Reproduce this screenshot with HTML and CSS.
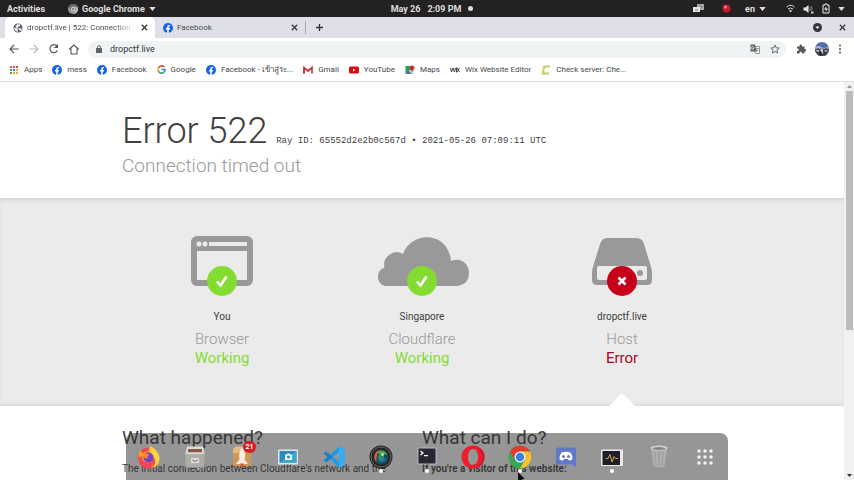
FILE: index.html
```html
<!DOCTYPE html>
<html lang="en">
<head>
<meta charset="utf-8">
<title>dropctf.live | 522: Connection timed out</title>
<link rel="stylesheet" href="styles.css">
</head>
<body>
<svg class="defs" aria-hidden="true">
  <defs>
    <symbol id="fb" viewBox="0 0 20 20"><circle cx="10" cy="10" r="10" fill="#1764e8"/><path d="M8.400 20v-7H6v-3h2.400V8c0-2.600 1.500-4 3.800-4l2 .2v2.500h-1.200c-1.200 0-1.500.7-1.500 1.500V10h2.600l-.4 3h-2.200v7z" fill="#fff"/></symbol>
    <symbol id="close" viewBox="0 0 10 10"><path d="M2 2l6 6M8 2l-6 6" stroke="#35363a" stroke-width="1.400"/></symbol>
    <symbol id="down" viewBox="0 0 8 5"><path d="M0 0h8L4 5z" fill="#dedede"/></symbol>
    <symbol id="check" viewBox="0 0 30 30"><circle cx="15" cy="15" r="15" fill="#84dc32"/><path d="M10 15.500l3.600 4L19.500 10.500" fill="none" stroke="#fff" stroke-width="2.600"/></symbol>
  </defs>
</svg>

<header class="desktop-bar">
  <div class="bar-left">
    <span>Activities</span>
    <span class="app-menu">
      <svg width="10" height="10" viewBox="0 0 20 20"><circle cx="10" cy="10" r="10" fill="#999"/><path d="M10 5h9A10 10 0 0 0 1.500 5l4 7z" fill="#666"/><path d="M10 20l5-8 4-7a10 10 0 0 1-9 15z" fill="#bbb"/><circle cx="10" cy="10" r="4.500" fill="#ddd"/><circle cx="10" cy="10" r="3" fill="#888"/></svg>
      <span>Google Chrome</span>
      <svg width="7" height="4"><use href="#down"/></svg>
    </span>
  </div>
  <div class="bar-clock"><span>May 26</span><span>2:09 PM</span><i class="notice"></i></div>
  <div class="bar-right">
    <svg class="tray-windows" width="11" height="9" viewBox="0 0 11 9"><path d="M4 0h7v6H4z" fill="#aaa"/><path d="M0 3h7v5H0z" fill="#e5e5e5"/><path d="M6 2h3v2M2 6h3" stroke="#888" fill="none"/></svg>
    <svg class="tray-record" width="9" height="9" viewBox="0 0 9 9"><circle cx="4.500" cy="4.500" r="4" fill="#c51930"/><circle cx="3.500" cy="3" r="1.500" fill="#f28a91"/></svg>
    <span class="tray-lang">en <svg width="7" height="4"><use href="#down"/></svg></span>
    <svg width="9" height="9" viewBox="0 0 18 18" fill="none" stroke="#ddd" stroke-width="2"><path d="M1 6q8-7 16 0M4 10q5-4 10 0"/><path d="M6 13q3-2 6 0l-3 4z" fill="#ddd" stroke="none"/></svg>
    <svg width="11" height="10" viewBox="0 0 22 20"><path d="M1 7h4l6-5v16l-6-5H1z" fill="#e5e5e5"/><path d="M13 6q3 4 0 8M16 4q4 6 1 9" stroke="#888" stroke-width="2" fill="none"/><path d="M16 15h5v4h-5z" fill="#ccc"/></svg>
    <svg width="8" height="11" viewBox="0 0 16 22"><path d="M2 4h4V2h4v2h4v16H2z" fill="none" stroke="#eee" stroke-width="2"/><path d="M9 6l-5 7h4l-1 5 5-7H8z" fill="#eee"/></svg>
    <svg width="7" height="4"><use href="#down"/></svg>
  </div>
</header>

<nav class="tabs" aria-label="Tabs">
  <div class="tab tab-active">
    <svg width="10" height="10" viewBox="0 0 20 20"><circle cx="10" cy="10" r="9" fill="#555a60"/><path d="M3 9l4 1 3 3-1 5-4-2-3-5zM9 2l6 1-2 4-3 1v3l4-1 4 2-2 4-3-1-2-3-4-2-2-4z" fill="#e6e8ea"/></svg>
    <span class="tab-title">dropctf.live | 522: Connection</span>
    <button aria-label="Close tab"><svg width="9" height="9"><use href="#close"/></svg></button>
  </div>
  <div class="tab">
    <svg width="10" height="10"><use href="#fb"/></svg>
    <span class="tab-title">Facebook</span>
    <button aria-label="Close tab"><svg width="9" height="9"><use href="#close"/></svg></button>
  </div>
  <button class="new-tab" aria-label="New tab"><svg width="9" height="9" viewBox="0 0 9 9"><path d="M4.500 1v7M1 4.500h7" stroke="#333" stroke-width="1.300"/></svg></button>
  <div class="window-buttons">
    <button aria-label="Search tabs"><svg width="9" height="9" viewBox="0 0 9 9"><circle cx="4.500" cy="4.500" r="4.500" fill="#35363a"/><path d="M2.500 3.500h4l-2 2.500z" fill="#fff"/></svg></button>
    <button aria-label="Close window"><svg width="9" height="9"><use href="#close"/></svg></button>
  </div>
</nav>

<div class="toolbar">
  <div class="nav-buttons">
    <button aria-label="Back"><svg width="10" height="10" viewBox="0 0 20 20"><path d="M19 10H2M10 2l-8 8 8 8" fill="none" stroke="#50545a" stroke-width="2.200"/></svg></button>
    <button aria-label="Forward"><svg width="10" height="10" viewBox="0 0 20 20"><path d="M1 10h17M10 2l8 8-8 8" fill="none" stroke="#b8babd" stroke-width="2.200"/></svg></button>
    <button aria-label="Reload"><svg width="10" height="10" viewBox="0 0 20 20"><path d="M17 13a8 8 0 1 1-1-9" fill="none" stroke="#50545a" stroke-width="2.400"/><path d="M18 0v8h-8z" fill="#50545a"/></svg></button>
    <button aria-label="Home"><svg width="10" height="11" viewBox="0 0 20 22"><path d="M1 10l9-8 9 8h-3v10H4V10z" fill="none" stroke="#50545a" stroke-width="2.200"/></svg></button>
  </div>
  <form class="address">
    <svg width="6" height="8" viewBox="0 0 12 16"><path d="M3 7V4.500a3 3 0 0 1 6 0V7" fill="none" stroke="#5f6368" stroke-width="2"/><rect y="6" width="12" height="10" rx="1" fill="#5f6368"/></svg>
    <input aria-label="Address" value="dropctf.live">
    <button type="button" aria-label="Translate"><svg width="10" height="10" viewBox="0 0 20 20"><path d="M8 5h11v14h-8z" fill="#fff" stroke="#777" stroke-width="1.500"/><path d="M1 1h9l4 14H1z" fill="#62666b"/><path d="M9 7.500H6v1.500h1.500a2.500 2.500 0 1 1-.5-3" fill="none" stroke="#fff" stroke-width="1.300"/><path d="M12 9h6M15 8v2M17 10q-1 3-4 5M13 11l4 4" stroke="#666" fill="none"/></svg></button>
    <button type="button" aria-label="Bookmark"><svg width="10" height="10" viewBox="0 0 20 20"><path d="M10 2l2.400 5.500 6 .5-4.500 4 1.300 6L10 15l-5.200 3 1.300-6-4.500-4 6-.5z" fill="none" stroke="#50545a" stroke-width="1.700"/></svg></button>
  </form>
  <div class="tool-buttons">
    <button aria-label="Extensions"><svg width="10" height="10" viewBox="0 0 20 20"><path d="M2 5h5V3.500a2.500 2.500 0 0 1 5 0V5h5v5h1a2.500 2.500 0 0 1 0 5h-1v4h-5v-1a2.500 2.500 0 0 0-5 0v1H2v-5h1a2.500 2.500 0 0 0 0-5H2z" fill="#55595e"/></svg></button>
    <button aria-label="Profile"><svg width="14" height="14" viewBox="0 0 28 28"><circle cx="14" cy="14" r="14" fill="#4f6fae"/><path d="M1 10q6-4 12 0t14-1v5H0z" fill="#a7b8d8"/><path d="M0 15l6-3 3 2 4-3 5 3 4-2 6 3a14 14 0 0 1-28 0z" fill="#454b50"/><path d="M3 16h5v3H3zM11 14l3-3 2 6-1 7h-4zM19 17h6v2h-6z" fill="#cbd0d3"/><path d="M8 21l4-3 3 8-5 1zM18 20l4 1-2 4z" fill="#1e2328"/></svg></button>
    <button aria-label="Menu"><svg width="4" height="10" viewBox="0 0 4 10" fill="#50545a"><circle cx="2" cy="1.500" r="1"/><circle cx="2" cy="5" r="1"/><circle cx="2" cy="8.500" r="1"/></svg></button>
  </div>
</div>

<nav class="bookmarks" aria-label="Bookmarks">
  <a href="#"><svg width="10" height="10" viewBox="0 0 10 10"><path d="M1 1h2v2H1zM4 1h2v2H4zM7 1h2v2H7z" fill="#d95045"/><path d="M1 4h2v2H1z" fill="#43a05b"/><path d="M4 4h2v2H4z" fill="#4779d6"/><path d="M7 4h2v2H7zM4 7h2v2H4zM7 7h2v2H7z" fill="#dfaa36"/><path d="M1 7h2v2H1z" fill="#43a05b"/></svg>Apps</a>
  <a href="#"><svg width="10" height="10"><use href="#fb"/></svg>mess</a>
  <a href="#"><svg width="10" height="10"><use href="#fb"/></svg>Facebook</a>
  <a href="#"><svg width="9" height="9" viewBox="0 0 20 20" fill="none" stroke-width="3.600"><path d="M16 4.500A8 8 0 0 0 3 6.500" stroke="#e04a3c"/><path d="M3 6.500a8 8 0 0 0 0 7" stroke="#efb52d"/><path d="M3 13.500a8 8 0 0 0 12 3" stroke="#36a557"/><path d="M15 16.500q3-2.500 3-6.500h-8" stroke="#4681e8"/></svg>Google</a>
  <a href="#"><svg width="10" height="10"><use href="#fb"/></svg><span>Facebook - เข้าสู่ระ...</span></a>
  <a href="#"><svg width="10" height="8" viewBox="0 0 20 16"><path d="M2 15V3l8 7 8-7v12" fill="none" stroke="#c63c35" stroke-width="3.400"/><path d="M2 5v10" stroke="#a73b48" stroke-width="3.400"/></svg>Gmail</a>
  <a href="#"><svg width="10" height="8" viewBox="0 0 20 16"><rect y="1" width="20" height="14" rx="3" fill="#d8090f"/><path d="M8 5l5 3-5 3z" fill="#fff"/></svg>YouTube</a>
  <a href="#"><svg width="10" height="10" viewBox="0 0 20 20"><path d="M1 2h13v16H1z" fill="#2d9b59"/><path d="M1 18L15 5l3 13z" fill="#d8dadd"/><path d="M1 18l6-7 7 7z" fill="#4773bc"/><path d="M14 1a5 5 0 0 1 5 5c0 3-4 4-5 9-1-5-5-6-5-9a5 5 0 0 1 5-5z" fill="#d63d3a"/><circle cx="14" cy="6" r="2" fill="#861f28"/></svg>Maps</a>
  <a href="#"><svg width="10" height="6" viewBox="0 0 20 12"><path d="M1 2l2 8 3-8 3 8 2-8M13 1v10M14 2l5 8M19 2l-5 8" fill="none" stroke="#333" stroke-width="1.800"/></svg>Wix Website Editor</a>
  <a href="#"><svg width="10" height="10" viewBox="0 0 20 20"><path d="M5 1h14l-2 4H8v3H3zM3 9h4v6h9v4H1z" fill="#c7cf58"/></svg>Check server: Che...</a>
</nav>

<div class="viewport">
  <main>
    <section class="intro">
      <div class="wrap">
        <h1>Error 522 <span class="ray">Ray ID: 65552d2e2b0c567d <b>•</b> 2021-05-26 07:09:11 UTC</span></h1>
        <h2>Connection timed out</h2>
      </div>
    </section>
    <section class="status">
      <div class="wrap status-grid">
        <article>
          <div class="picture">
            <svg width="62" height="50" viewBox="0 0 62 50"><rect width="62" height="50" rx="6" fill="#999"/><path d="M6 15h50v29H6zM18 6h38v4H18z" fill="#ebebeb"/><circle cx="8" cy="8" r="2.500" fill="#ebebeb"/><circle cx="14" cy="8" r="2.500" fill="#ebebeb"/></svg>
            <svg class="badge" width="30" height="30"><use href="#check"/></svg>
          </div>
          <p class="place">You</p><h3>Browser</h3><p class="ok">Working</p>
        </article>
        <article>
          <div class="picture">
            <svg width="94" height="50" viewBox="0 0 94 50"><path d="M10 50A9.700 9.700 0 0 1 9.500 31.500 12.500 12.500 0 0 1 28 18C36-5 73-6 76 25 86 21 94 28 94 37Q94 48 83 50z" fill="#999"/></svg>
            <svg class="badge" width="30" height="30"><use href="#check"/></svg>
          </div>
          <p class="place">Singapore</p><h3>Cloudflare</h3><p class="ok">Working</p>
        </article>
        <article class="failed">
          <div class="picture">
            <svg width="60" height="50" viewBox="0 0 60 50"><path d="M15 2h30q5 0 7 6l7 23q1 3 1 6v7q0 5-5 5H5q-5 0-5-5v-7q0-3 1-6L8 8q2-6 7-6z" fill="#999"/><rect x="5" y="30" width="50" height="14" rx="2" fill="#ebebeb"/><circle cx="48" cy="37" r="3" fill="#999"/></svg>
            <svg class="badge" width="30" height="30" viewBox="0 0 30 30"><circle cx="15" cy="15" r="15" fill="#c50219"/><path d="M11.500 11.500l7 7M18.500 11.500l-7 7" stroke="#fff" stroke-width="2.600"/></svg>
          </div>
          <p class="place">dropctf.live</p><h3>Host</h3><p class="bad">Error</p>
        </article>
      </div>
    </section>
    <section class="wrap help">
      <div><h4>What happened?</h4><p>The initial connection between Cloudflare's network and the</p></div>
      <div><h4>What can I do?</h4><p><strong>If you're a visitor of this website:</strong></p></div>
    </section>
  </main>
  <div class="scrollbar" aria-hidden="true">
    <svg width="10" height="9" viewBox="0 0 10 9"><path d="M3 6h5L5.500 3z" fill="#999"/></svg>
    <div class="track"><div class="thumb"></div></div>
    <svg width="10" height="9" viewBox="0 0 10 9"><path d="M3 3h5L5.500 6z" fill="#333"/></svg>
  </div>
</div>

<nav class="dock" aria-label="Dock">
  <button aria-label="Firefox"><svg viewBox="0 0 48 48"><circle cx="23" cy="26" r="21" fill="#f34554"/><path d="M6 10l6 6q5-4 10-3l4-10q17 9 19 23-3 16-18 20Q47 30 33 17q4 14-10 18Q9 34 9 21L4 26q-2-8 2-16z" fill="#ff9d22"/><path d="M26 2q19 10 19 26-1 12-12 18 8-14-2-26-7-6-5-18z" fill="#ffd43c"/><circle cx="23" cy="25" r="10" fill="#7542c4"/><path d="M12 20q7-6 14 0-8 1-4 6-6 4-10-6z" fill="#f88628"/></svg></button>
  <button aria-label="Files"><svg viewBox="0 0 48 48"><path d="M8 3h32l3 12H5z" fill="#dedbd7"/><path d="M10 8h28v7H10z" fill="#815b43"/><path d="M5 15h38v30H5z" fill="#b0ada9"/><path d="M5 15h38v3H5z" fill="#dedad6"/><rect x="16" y="26" width="16" height="10" rx="1" fill="#e2dfdb"/><path d="M20 29v3h8v-3" fill="none" stroke="#777" stroke-width="2"/></svg></button>
  <button aria-label="Software, 21 updates"><svg viewBox="0 0 48 48"><path d="M6 8h36v34H6z" fill="#ce9858"/><path d="M6 8l5-5h28l3 5v8H6z" fill="#e2bb84"/><path d="M24 5q9 12 5 24l7 9H12l7-9Q16 16 24 5z" fill="#f4eee8"/><path d="M20 37h8l-4 9z" fill="#e94b35"/></svg><span class="count">21</span></button>
  <button aria-label="Screenshot"><svg viewBox="0 0 48 48"><rect x="4" y="9" width="40" height="30" rx="2" fill="#dce8ef"/><path d="M7 12h34v24H7z" fill="#2d8ac0"/><path d="M7 36l34-24v24z" fill="#43a8c5"/><path d="M18 19h3l2-2h4l2 2h3v11H18z" fill="#eef5f8"/><circle cx="25" cy="24" r="3" fill="#3389b1"/></svg></button>
  <button aria-label="Visual Studio Code"><svg viewBox="0 0 48 48"><path fill-rule="evenodd" d="M34 3L12 24l22 21 11-5V8zM34 15v18L22 24z" fill="#209bea"/><path d="M3 17l5-4 14 11-14 11-5-4 8-7z" fill="#1683ce"/><path d="M34 3l11 5v32l-11 5z" fill="#35adf4"/></svg></button>
  <button class="running" aria-label="Camera"><svg viewBox="0 0 48 48"><circle cx="24" cy="24" r="23" fill="#262524"/><circle cx="24" cy="24" r="20" fill="none" stroke="#6e6964" stroke-width="2"/><circle cx="24" cy="24" r="15" fill="#164e54"/><path d="M24 10a14 14 0 0 0-9 24q-2-16 9-24z" fill="#e05d30"/><path d="M18 14q13-7 18 6-8-3-13 1z" fill="#4dab52"/><path d="M18 31q8 7 16-1l-8-12z" fill="#246eb5"/><circle cx="24" cy="24" r="6" fill="#2a8b73"/><circle cx="27" cy="19" r="3" fill="#bddd85"/></svg></button>
  <button class="running" aria-label="Terminal"><svg viewBox="0 0 48 48"><rect x="5" y="5" width="38" height="34" rx="2" fill="#b8b5bb"/><path d="M7 7h34v30H7z" fill="#292533"/><path d="M11 12l5 4-5 4M18 21h8" fill="none" stroke="#fff" stroke-width="2.500"/></svg></button>
  <button aria-label="Opera"><svg viewBox="0 0 48 48"><path fill-rule="evenodd" d="M24 1a23 23 0 1 0 0 46 23 23 0 0 0 0-46m0 7c6 0 10 7 10 16s-4 16-10 16-10-7-10-16S18 8 24 8" fill="#ed1c2e"/><path d="M29 5q14 3 14 19T29 43q18-1 18-19T29 5z" fill="#c91528"/></svg></button>
  <button class="running" aria-label="Google Chrome"><svg viewBox="0 0 48 48"><circle cx="24" cy="24" r="23" fill="#34a853"/><path d="M24 13h20A23 23 0 0 0 4 13l10 17z" fill="#e33b30"/><path d="M24 47l10-17L44 13A23 23 0 0 1 24 47z" fill="#fbc02d"/><path d="M24 13h20L34 30z" fill="#fbc02d"/><circle cx="24" cy="24" r="11" fill="#f4f4f4"/><circle cx="24" cy="24" r="8.500" fill="#397de8"/></svg></button>
  <button aria-label="Discord"><svg viewBox="0 0 48 48"><path d="M7 5h34q3 0 3 3v37l-7-6H7q-3 0-3-3V8q0-3 3-3z" fill="#6078ca"/><path d="M15 15q9-3 18 0 5 7 4 13-4 4-7 3l-2-3h-8l-2 3q-4 1-7-3-1-6 4-13z" fill="#fff"/><circle cx="19" cy="23" r="3" fill="#6078ca"/><circle cx="29" cy="23" r="3" fill="#6078ca"/></svg></button>
  <button class="running" aria-label="System monitor"><svg viewBox="0 0 48 48"><rect x="2" y="9" width="44" height="33" rx="2" fill="#ece9e9"/><path d="M5 12h35v28H5z" fill="#211e2a"/><path d="M11 27h5l4-8 4 15 4-11 3 4h5" fill="none" stroke="#c7aa58" stroke-width="2"/></svg></button>
  <button aria-label="Trash"><svg viewBox="0 0 48 48"><path d="M8 7h32l-5 36q-11 4-22 0z" fill="#b0b0b0"/><path d="M16 13l2 29M24 13v30M32 13l-2 29" stroke="#a0a0a0" stroke-width="3"/><ellipse cx="24" cy="6" rx="17" ry="5" fill="#d4d4d4"/><ellipse cx="24" cy="7" rx="13" ry="3" fill="#838383"/></svg></button>
  <button aria-label="Show applications"><svg viewBox="0 0 48 48" fill="#f3f3f3"><circle cx="12" cy="12" r="3.500"/><circle cx="24" cy="12" r="3.500"/><circle cx="36" cy="12" r="3.500"/><circle cx="12" cy="24" r="3.500"/><circle cx="24" cy="24" r="3.500"/><circle cx="36" cy="24" r="3.500"/><circle cx="12" cy="36" r="3.500"/><circle cx="24" cy="36" r="3.500"/><circle cx="36" cy="36" r="3.500"/></svg></button>
</nav>
<svg class="pointer" width="8" height="12" viewBox="0 0 8 12" aria-hidden="true"><path d="M1 1v10l2-2 2 3 2-1-2-3h3z" fill="#111"/></svg>
</body>
</html>
```
FILE: styles.css
```css
* { box-sizing: border-box; }
html { height: 100%; }
body {
  margin: 0;
  height: 100%;
  display: flex;
  flex-direction: column;
  overflow: hidden;
  position: relative;
  background: #fff;
  color: #404040;
  font: 9px/12px Roboto, "Noto Sans", sans-serif;
}
h1, h2, h3, h4, p { margin: 0; font-weight: 400; }
button { padding: 0; border: 0; background: none; display: flex; align-items: center; justify-content: center; font: inherit; }
svg { display: block; flex: none; }
.defs { position: absolute; width: 0; height: 0; }

.desktop-bar {
  flex: none;
  height: 17px;
  padding: 0 9px 0 7px;
  display: grid;
  grid-template-columns: 1fr auto 1fr;
  align-items: center;
  background: #242122;
  color: #dedede;
  font-weight: 700;
}
.bar-left { display: flex; gap: 23px; }
.app-menu { display: flex; align-items: center; gap: 4px; }
.bar-clock { display: flex; align-items: center; gap: 7px; padding-left: 12px; }
.notice { width: 5px; height: 5px; border-radius: 50%; background: #ddd; }
.bar-right { display: flex; align-items: center; justify-content: flex-end; gap: 8px; }
.tray-windows { margin-right: 10px; }
.tray-record { margin-right: 6px; }
.tray-lang { display: flex; align-items: center; gap: 4px; margin-right: 12px; }

.tabs { flex: none; height: 21px; display: flex; align-items: center; padding: 0 7px 0 5px; background: #dfe0e7; }
.tab { width: 150px; height: 21px; padding: 0 6px 0 8px; display: flex; align-items: center; gap: 4px; color: #484b50; font-size: 8px; }
.tab-active { background: #fff; border-radius: 5px 5px 0 0; }
.tab-title { flex: 1; overflow: hidden; white-space: nowrap; }
.tab-active .tab-title { mask-image: linear-gradient(90deg, #000 80%, transparent); }
.new-tab { height: 13px; padding-left: 9px; border-left: 1px solid #a9abb0; }
.window-buttons { display: flex; gap: 16px; margin-left: auto; }

.toolbar { flex: none; height: 22px; display: flex; align-items: center; padding: 0 12px 0 9px; }
.nav-buttons { display: flex; align-items: center; gap: 10px; }
.address { flex: 1; height: 17px; margin: 0 10px 0 9px; padding: 0 6px 0 8px; display: flex; align-items: center; gap: 8px; border-radius: 9px; background: #f0f3f4; }
.address input { flex: 1; min-width: 0; padding: 0; border: 0; outline: 0; background: none; color: #303338; font: inherit; }
.address button + button { margin-left: 2px; }
.tool-buttons { display: flex; align-items: center; gap: 9px; }

.bookmarks { flex: none; height: 22px; display: flex; align-items: center; gap: 10px; padding: 0 9px 2px; border-bottom: 1px solid #dedede; white-space: nowrap; font-size: 8px; }
.bookmarks a { display: flex; align-items: center; gap: 5px; color: #45484c; text-decoration: none; }

.viewport { flex: 1; min-height: 0; display: flex; }
main { flex: 1; min-width: 0; overflow: hidden; }
.wrap { width: 100%; max-width: 600px; margin: 0 auto; }
.intro { padding: 27px 0 19px; }
h1 { font-size: 36px; font-weight: 300; line-height: 44px; white-space: nowrap; }
.ray { font: 9px "Liberation Mono", monospace; }
.ray b { font-weight: 400; }
h2 { color: #999; font-size: 19px; font-weight: 300; line-height: 26px; }
.status { padding: 38px 0; background: #ebebeb; box-shadow: inset 0 4px 5px -3px #ccc, inset 0 -4px 5px -4px #ccc; }
.status-grid { display: grid; grid-template-columns: repeat(3, 1fr); }
article { display: flex; flex-direction: column; align-items: center; position: relative; }
.picture { height: 61px; position: relative; }
.badge { position: absolute; left: calc(50% - 15px); bottom: 1px; }
.place { margin: 13px 0 7px; font-size: 10px; line-height: 13px; }
h3, .ok, .bad { font-size: 15px; line-height: 19px; }
h3 { color: #999; font-weight: 300; }
.ok { color: #84dc32; }
.bad { color: #a70825; }
.failed::after { content: ""; position: absolute; bottom: -38px; border: solid transparent; border-width: 0 13px 13px; border-bottom-color: #fff; }
.help { display: grid; grid-template-columns: repeat(2, 1fr); padding-top: 20px; }
h4 { font-size: 19px; line-height: 24px; }
.help p { margin-top: 12px; font-size: 10px; line-height: 14px; white-space: nowrap; }
.help strong { font-weight: 600; }
.scrollbar { flex: none; width: 10px; display: flex; flex-direction: column; background: #f1f1f1; }
.track { flex: 1; padding: 0 1px 0 2px; }
.thumb { height: 63%; background: #bcbcbc; }

.dock {
  position: absolute;
  bottom: 0;
  left: 126px;
  right: 126px;
  height: 47px;
  display: grid;
  grid-template-columns: repeat(13, 1fr);
  border-radius: 8px 8px 0 0;
  background: rgba(45, 45, 45, .5);
}
.dock button { position: relative; }
.dock svg { width: 24px; height: 24px; }
.running::after { content: ""; position: absolute; bottom: 7px; width: 4px; height: 4px; border-radius: 50%; background: #fff; }
.count { position: absolute; top: 8px; right: 9px; width: 13px; height: 12px; border-radius: 6px; background: #d91c20; color: #fff; font-size: 7px; font-weight: 700; line-height: 12px; }
.pointer { position: absolute; bottom: -3px; left: 517px; }
```
